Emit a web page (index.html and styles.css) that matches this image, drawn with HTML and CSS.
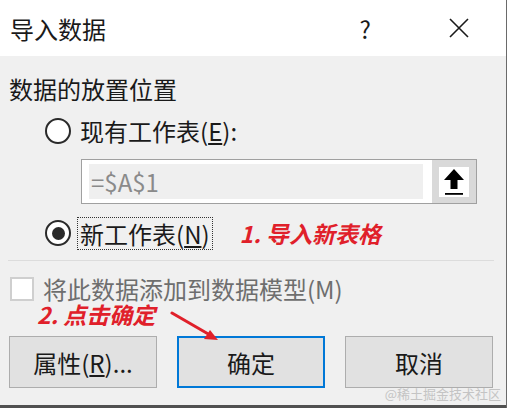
FILE: index.html
```html
<!DOCTYPE html>
<html lang="zh">
<head>
<meta charset="utf-8">
<link rel="stylesheet" href="styles.css">
</head>
<body>
<div class="window">
  <div class="titlebar">
    <span class="title">导入数据</span>
    <span class="help">?</span>
    <svg class="close" width="20" height="20" viewBox="0 0 20 20"><path d="M1 1 L19 19 M19 1 L1 19" stroke="#1a1a1a" stroke-width="1.6" fill="none"/></svg>
  </div>
  <div class="content">
    <div class="heading">数据的放置位置</div>
    <div class="radio-row">
      <span class="radio"></span>
      <span class="label">现有工作表(<u>E</u>):</span>
    </div>
    <div class="ref-input">
      <div class="field">=$A$1</div>
      <div class="pick">
        <div class="pick-inner">
          <svg width="24" height="28" viewBox="0 0 24 28"><path d="M12 1 L22 12 L15.5 12 L15.5 21 L8.5 21 L8.5 12 L2 12 Z" fill="#000"/><rect x="3" y="25" width="18" height="1.8" fill="#000"/></svg>
        </div>
      </div>
    </div>
    <div class="radio-row second">
      <span class="radio checked"></span>
      <span class="label focus">新工作表(<u>N</u>)</span>
      <span class="note note1">1. 导入新表格</span>
    </div>
    <div class="sep"></div>
    <div class="check-row">
      <span class="checkbox"></span>
      <span class="check-label">将此数据添加到数据模型(M)</span>
    </div>
    <div class="note note2">2. 点击确定</div>
    <div class="buttons">
      <button class="btn">属性(<u>R</u>)...</button>
      <button class="btn primary">确定</button>
      <button class="btn">取消</button>
    </div>
    <svg class="arrow" width="60" height="40" viewBox="0 0 60 40"><path d="M2 3 L40 25" stroke="#e0202a" stroke-width="3" fill="none" stroke-linecap="round"/><path d="M48 30 L34 29 L40 20 Z" fill="#e0202a"/></svg>
    <div class="watermark">@稀土掘金技术社区</div>
  </div>
  <div class="taskbar"></div>
</div>
</body>
</html>
```
FILE: styles.css
```css
* { box-sizing: border-box; }
html, body { margin: 0; padding: 0; background: #fff; }
body { width: 508px; height: 408px; overflow: hidden; font-family: "Noto Sans CJK SC", "Noto Sans", sans-serif; color: #1a1a1a; }
.window { width: 507px; height: 408px; border-right: 1px solid #6a6a6a; display: flex; flex-direction: column; position: relative; }
.titlebar { height: 56px; background: #fff; display: flex; align-items: center; padding-left: 10px; font-size: 24px; flex: none; }
.title { flex: 1; }
.help { margin-right: 78px; font-size: 24px; }
.close { margin-right: 37px; }
.content { flex: 1; background: #f0f0f0; position: relative; padding-top: 16px; display: flex; flex-direction: column; font-size: 24px; }
.heading { height: 34px; line-height: 34px; padding-left: 9px; }
.radio-row { height: 34px; margin-top: 8px; display: flex; align-items: center; padding-left: 45px; }
.radio-row.second { margin-top: 12px; }
.radio { width: 26px; height: 26px; border: 2.5px solid #2a2a2a; border-radius: 50%; background: #fff; margin-right: 9px; flex: none; display: flex; align-items: center; justify-content: center; }
.radio.checked::after { content: ""; width: 13px; height: 13px; border-radius: 50%; background: #2a2a2a; }
.label { line-height: 32px; }
.label.focus { border: 1px dotted #333; padding: 0 2px; margin-left: -3px; line-height: 31px; }
.ref-input { margin: 11px 0 0 81px; width: 396px; height: 45px; border: 1px solid #a0a0a0; background: #fff; display: flex; }
.field { margin: 4px 0 4px 7px; width: 334px; background: #efefef; color: #8a8a8a; padding-left: 2px; line-height: 35px; font-size: 24px; }
.pick { margin-left: 9px; flex: 1; background: #d9d9d9; display: flex; align-items: center; justify-content: center; }
.pick-inner { width: 30px; height: 30px; background: #fff; display: flex; align-items: center; justify-content: center; }
.note { color: #e0202a; font-style: italic; font-weight: bold; font-size: 23px; line-height: 24px; }
.note1 { margin-left: 27px; }
.sep { height: 1px; background: #dcdcdc; margin: 10px 12px 0 8px; }
.check-row { margin-top: 16px; height: 24px; display: flex; align-items: center; padding-left: 10px; }
.checkbox { width: 24px; height: 24px; border: 2px solid #cfcfcf; background: #fff; margin-right: 9px; flex: none; }
.check-label { color: #6e6e6e; line-height: 24px; }
.note2 { margin: 2px 0 0 37px; height: 22px; line-height: 22px; }
.buttons { margin: 11px 0 0 9px; display: flex; gap: 20px; }
.btn { width: 148px; height: 52px; background: #e1e1e1; border: 1px solid #adadad; font-family: inherit; font-size: 24px; color: #1a1a1a; padding: 0; }
.btn.primary { border: 2px solid #0078d7; }
.arrow { position: absolute; left: 170px; top: 254px; }
.watermark { position: absolute; right: 5px; bottom: 2px; font-size: 13px; color: #c4c4c4; }
.taskbar { height: 3px; background: #505050; flex: none; }
```
